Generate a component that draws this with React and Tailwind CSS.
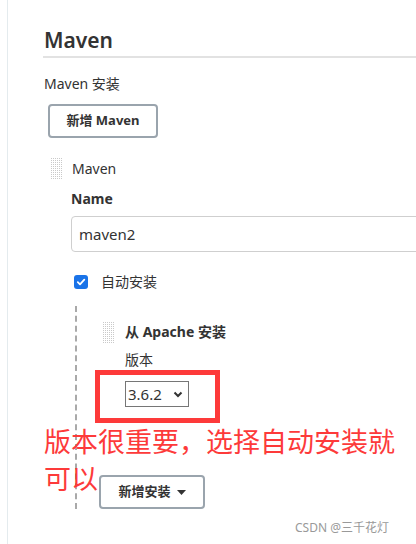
import React from "react";

const font = { fontFamily: '"Noto Sans", "Noto Sans CJK SC", sans-serif' };

const Grip = ({ className = "" }) => (
  <svg width="12" height="21" className={"shrink-0 " + className}>
    <defs>
      <pattern id="dots" width="2" height="2" patternUnits="userSpaceOnUse">
        <rect width="1" height="1" fill="#c9c9c9" />
      </pattern>
    </defs>
    <rect width="12" height="21" fill="url(#dots)" />
  </svg>
);

const App = () => {
  return (
    <div className="relative w-[416px] h-[544px] overflow-hidden bg-white text-[#333]" style={font}>
      <div className="ml-[7px] h-full border-l border-[#e4ebee] pl-[35px]">
        {/* Section heading */}
        <div className="pt-[26px] border-b-2 border-[#e2e2e2] pb-[2px]">
          <h2 className="text-[21px] font-semibold leading-[28px] pl-[1px]">Maven</h2>
        </div>

        <div className="mt-[16px] text-[14px] leading-[20px] pl-[1px]">Maven 安装</div>

        <button className="mt-[10px] ml-[5px] h-[34px] w-[110px] rounded-[4px] border-2 border-[#9aa4ad] text-[13px] font-bold text-[#333]">
          新增 Maven
        </button>

        {/* Maven installation block */}
        <div className="mt-[21px] flex items-start">
          <Grip className="ml-[8px] mt-[-1px]" />
          <div className="ml-[8px] min-w-0 flex-1">
            <div className="text-[14px] leading-[20px] pl-[1px]">Maven</div>
            <div className="mt-[10px] text-[14px] font-bold leading-[20px]">Name</div>
            <div className="mt-[7px] h-[36px] w-[360px] rounded-l-[4px] border border-[#cfcfcf] flex items-center pl-[7px] text-[15px] text-[#333]">
              maven2
            </div>

            <div className="mt-[20px] flex items-center">
              <span className="ml-[3px] flex h-[14px] w-[14px] items-center justify-center rounded-[3px] bg-[#1a73e8]">
                <svg width="10" height="10" viewBox="0 0 10 10">
                  <path d="M1.8 5.2 L4 7.3 L8.3 2.6" stroke="white" strokeWidth="1.8" fill="none" strokeLinecap="round" strokeLinejoin="round" />
                </svg>
              </span>
              <span className="ml-[13px] text-[14px] leading-[20px]">自动安装</span>
            </div>

            <div className="mt-[14px] ml-[4px] border-l-2 border-dashed border-[#a9a9a9]">
              <div className="pt-[16px] flex items-start">
                <Grip className="ml-[26px]" />
                <div className="ml-[10px]">
                  <div className="text-[14px] font-bold leading-[20px]">从 Apache 安装</div>
                  <div className="mt-[8px] text-[14px] leading-[20px]">版本</div>
                  <div className="mt-[11px] flex h-[26px] w-[64px] items-center justify-between border border-[#767676] pl-[2px] pr-[5px] text-[15px] text-[#333]">
                    <span>3.6.2</span>
                    <svg width="10" height="7" viewBox="0 0 10 7">
                      <path d="M1.5 1.5 L5 5 L8.5 1.5" stroke="#333" strokeWidth="2" fill="none" />
                    </svg>
                  </div>
                </div>
              </div>
              <button className="mt-[68px] ml-[22px] flex h-[34px] w-[106px] items-center justify-center gap-[6px] rounded-[4px] border-2 border-[#9aa4ad] text-[13px] font-bold text-[#333]">
                新增安装
                <svg width="9" height="5" viewBox="0 0 9 5">
                  <path d="M0 0 L9 0 L4.5 5 Z" fill="#333" />
                </svg>
              </button>
            </div>
          </div>
        </div>
      </div>

      {/* Annotation overlay */}
      <div className="absolute left-[95px] top-[370px] h-[53px] w-[125px] border-[5px] border-[#fd3a3a]" />
      <div className="absolute left-[44px] top-[423px] w-[360px] text-[27px] leading-[37px] text-[#fd3a3a]">
        版本很重要，选择自动安装就可以
      </div>
      <div className="absolute left-[295px] top-[519px] text-[12px] text-[#999]">CSDN @三千花灯</div>
    </div>
  );
};

export default App;
